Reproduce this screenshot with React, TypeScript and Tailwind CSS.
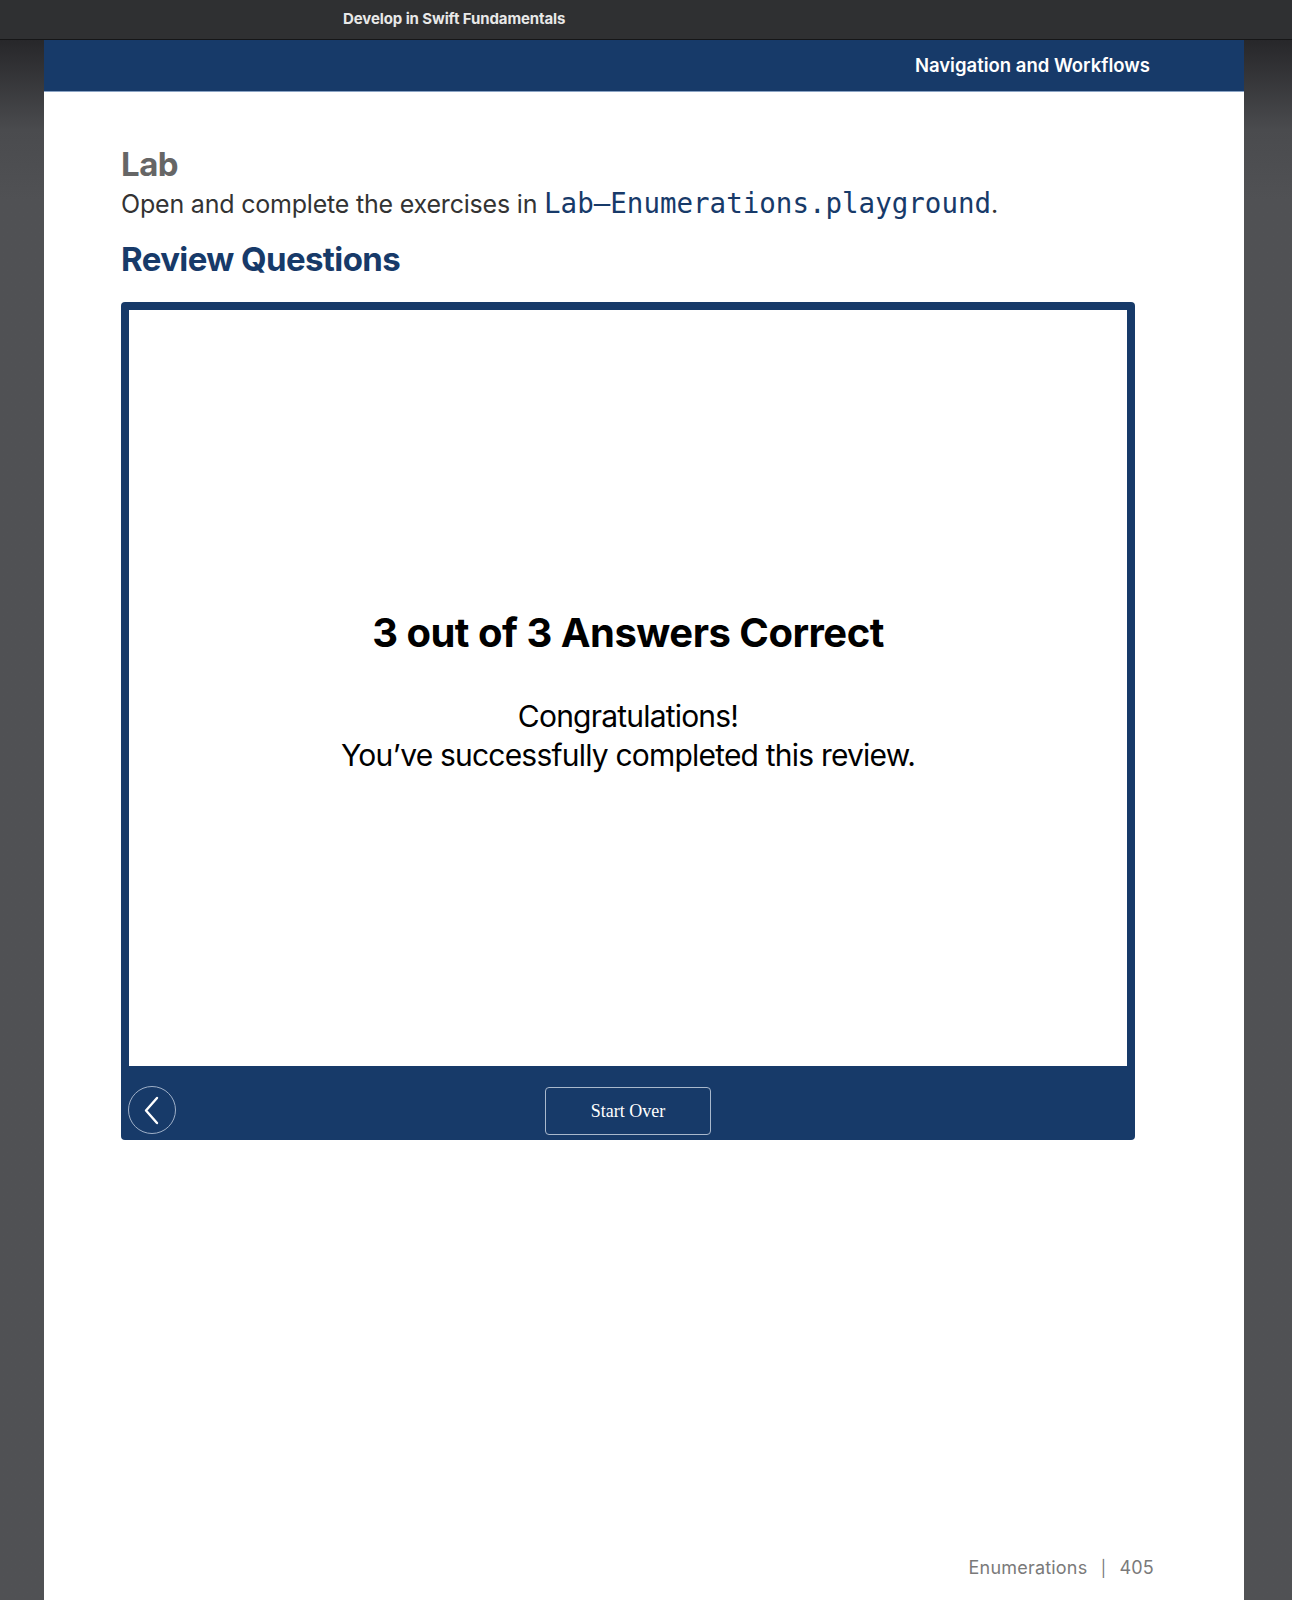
import React from 'react';

const SANS = { fontFamily: 'Inter, "Noto Sans", sans-serif' };

const App = () => {
  return (
    <div className="min-h-[1600px] w-full flex flex-col bg-[#505154]" style={SANS}>
      {/* Window title bar */}
      <div className="h-[40px] bg-[#2f3032] border-b border-[#161617] flex items-center shrink-0">
        <span className="ml-[343px] text-[15px] font-bold text-[#e8e8e8] tracking-[-0.1px]">
          Develop in Swift Fundamentals
        </span>
      </div>

      <div className="flex-1 flex bg-gradient-to-b from-[#27272a] via-[#4a4b4e] via-[90px] to-[#505154] to-[160px]">
        <div className="w-[44px] shrink-0" />
        {/* Page */}
        <div className="flex-1 bg-white flex flex-col">
          <div className="h-[52px] bg-[#173a69] border-b border-[#8aa3c4] flex items-center justify-end pr-[94px]">
            <span className="text-[18.5px] font-semibold text-white tracking-[0px]">Navigation and Workflows</span>
          </div>

          <div className="pl-[77px] pr-[109px] pt-[52px] flex flex-col">
            <h2 className="text-[33px] leading-[40px] font-bold text-[#666666] tracking-[-0.5px]">Lab</h2>
            <p className="mt-[1px] text-[25px] leading-[36px] text-[#333333] tracking-[-0.2px]">
              Open and complete the exercises in{' '}
              <span className="text-[#173a69] text-[27.5px] tracking-[0px]" style={{ fontFamily: '"DejaVu Sans Mono", monospace' }}>
                Lab—Enumerations.playground
              </span>
              .
            </p>
            <h2 className="mt-[17px] text-[33px] leading-[40px] font-bold text-[#173a69] tracking-[-0.6px]">Review Questions</h2>

            {/* Quiz widget */}
            <div className="mt-[23px] w-[1014px] bg-[#173a69] rounded-[4px] p-[8px] pb-0 flex flex-col">
              <div className="h-[756px] bg-white flex flex-col items-center justify-center pt-[8px]">
                <div className="text-[40px] leading-[48px] font-bold text-black tracking-[-0.5px]">
                  3 out of 3 Answers Correct
                </div>
                <div className="mt-[40px] text-[30px] leading-[39px] text-black text-center tracking-[-0.8px]">
                  <div>Congratulations!</div>
                  <div>You’ve successfully completed this review.</div>
                </div>
              </div>
              <div className="h-[74px] flex items-end pb-[5px]">
                <button className="ml-[-1px] mb-[1px] w-[48px] h-[48px] rounded-full border border-[#9fb0c8] flex items-center justify-center">
                  <svg width="22" height="30" viewBox="0 0 22 30" fill="none">
                    <path d="M16 3 L5 15.5 L16 28" stroke="white" strokeWidth="2.4" strokeLinecap="round" strokeLinejoin="round" />
                  </svg>
                </button>
                <button
                  className="ml-[369px] w-[166px] h-[48px] rounded-[4px] border border-[#a9b8cc] text-white text-[18px]"
                  style={{ fontFamily: '"Liberation Serif", serif' }}
                >
                  Start Over
                </button>
              </div>
            </div>
          </div>

          <div className="flex-1" />
          <div className="h-[64px] flex items-start justify-end pr-[90px] pt-[18px]">
            <span className="text-[18px] text-[#7a7a7a] tracking-[0.2px]">
              Enumerations <span className="mx-[8px] text-[16px]">|</span> 405
            </span>
          </div>
        </div>
        <div className="w-[48px] shrink-0" />
      </div>
    </div>
  );
};

export default App;
